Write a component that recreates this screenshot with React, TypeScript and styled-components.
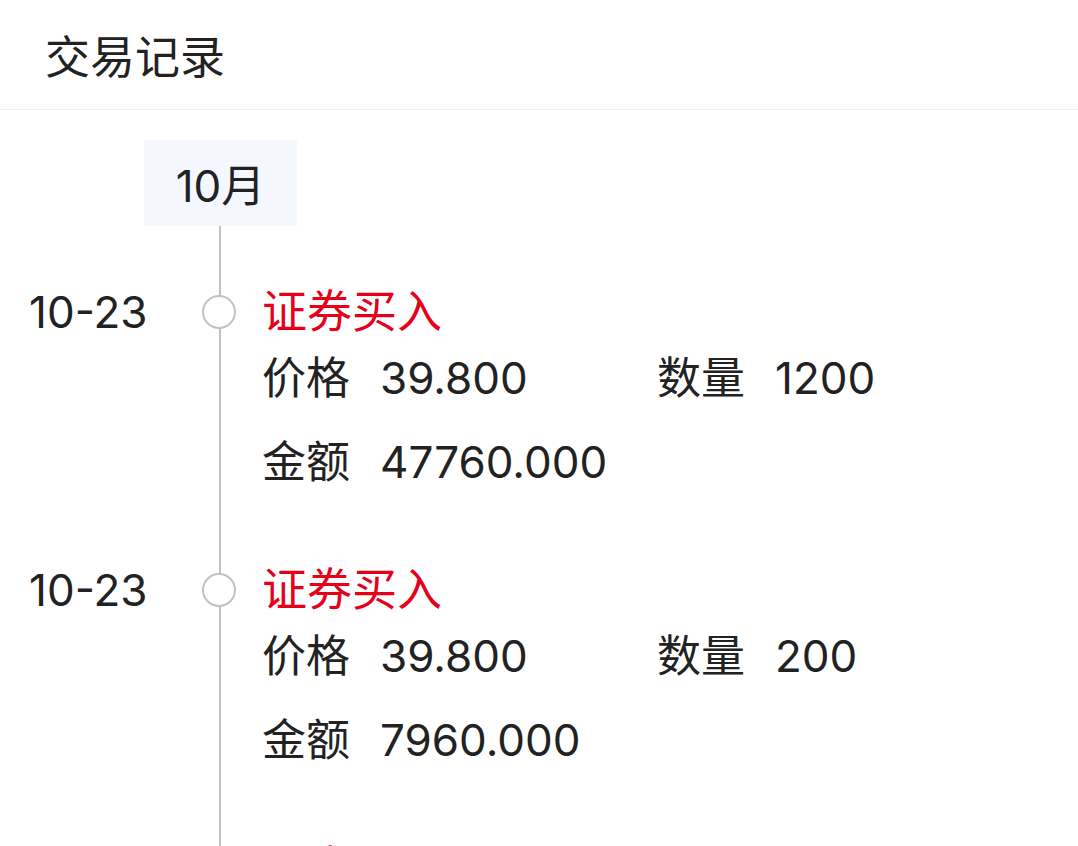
import React from "react";
import styled, { createGlobalStyle } from "styled-components";

const Global = createGlobalStyle`
  html, body { margin: 0; padding: 0; background: #ffffff; }
  body { font-family: Inter, "Noto Sans CJK SC", "Noto Sans", sans-serif; color: #222222; }
`;

const Page = styled.div`
  width: 1078px;
  height: 846px;
  overflow: hidden;
  background: #ffffff;
`;

const Header = styled.header`
  height: 110px;
  box-sizing: border-box;
  border-bottom: 1px solid #efefef;
  display: flex;
  align-items: center;
  padding-left: 45px;
  font-size: 45px;
  color: #222222;
`;

const MonthWrap = styled.div`
  padding: 30px 0 0 144px;
`;

const MonthTag = styled.div`
  width: 153px;
  height: 86px;
  background: #f5f7fe;
  display: flex;
  align-items: center;
  justify-content: center;
  font-size: 44px;
  color: #222222;
`;

const Timeline = styled.div`
  background: linear-gradient(#c2c2c2, #c2c2c2) no-repeat 219px 0 / 2px 100%;
  padding-bottom: 40px;
`;

const Item = styled.div`
  display: grid;
  grid-template-columns: 200px 38px 1fr;
  padding-top: 62px;
`;

const DateCol = styled.div`
  padding-left: 29px;
  font-size: 44px;
  line-height: 48px;
  height: 48px;
  color: #222222;
`;

const MarkerCol = styled.div`
  height: 48px;
  display: flex;
  align-items: center;
  justify-content: center;
`;

const Dot = styled.div`
  width: 30px;
  height: 30px;
  border: 2px solid #c2c2c2;
  border-radius: 50%;
  background: #ffffff;
`;

const Body = styled.div`
  padding-left: 24px;
`;

const Title = styled.div`
  font-size: 45px;
  line-height: 48px;
  color: #e6001a;
`;

const Fields = styled.div`
  display: grid;
  grid-template-columns: 395px 395px;
`;

const Field = styled.div`
  font-size: 44px;
  line-height: 84px;
  white-space: nowrap;
  display: flex;
  gap: 30px;
  color: #222222;
`;

const Label = styled.span``;
const Value = styled.span``;

type Rec = { date: string; title: string; price: string; qty: string; amount: string };

const records: Rec[] = [
  { date: "10-23", title: "证券买入", price: "39.800", qty: "1200", amount: "47760.000" },
  { date: "10-23", title: "证券买入", price: "39.800", qty: "200", amount: "7960.000" },
  { date: "10-23", title: "证券买入", price: "39.800", qty: "200", amount: "7960.000" },
];

export default function App() {
  return (
    <Page>
      <Global />
      <Header>交易记录</Header>
      <MonthWrap>
        <MonthTag>10月</MonthTag>
      </MonthWrap>
      <Timeline>
        {records.map((r, i) => (
          <Item key={i}>
            <DateCol>{r.date}</DateCol>
            <MarkerCol>
              <Dot />
            </MarkerCol>
            <Body>
              <Title>{r.title}</Title>
              <Fields>
                <Field>
                  <Label>价格</Label>
                  <Value>{r.price}</Value>
                </Field>
                <Field>
                  <Label>数量</Label>
                  <Value>{r.qty}</Value>
                </Field>
                <Field>
                  <Label>金额</Label>
                  <Value>{r.amount}</Value>
                </Field>
              </Fields>
            </Body>
          </Item>
        ))}
      </Timeline>
    </Page>
  );
}
